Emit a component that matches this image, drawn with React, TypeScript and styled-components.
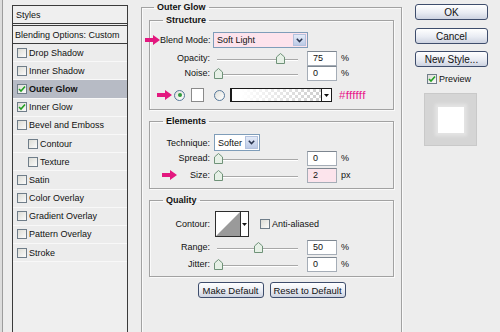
import styled, { createGlobalStyle } from "styled-components";

const GlobalStyle = createGlobalStyle`
  html, body {
    margin: 0;
    padding: 0;
    background: #ededed;
  }
`;

const Root = styled.div`
  box-sizing: border-box;
  color: #111;
  display: flex;
  align-items: flex-start;
  font-family: "Liberation Sans", Arial, sans-serif;
  font-size: 9px;
  height: 332px;
  overflow: hidden;
  padding-left: 12px;
  width: 500px;
  background: #ededed;
  box-shadow: inset 2px 0 0 #dcdcdc, inset 3px 0 0 #9c9c9c;
`;

/* ---------- left style list ---------- */

const StylePanel = styled.div`
  background: #efefef;
  border: 1px solid #3b3b3b;
  box-sizing: border-box;
  flex: none;
  height: 345px;
  margin-top: 5px;
  width: 116px;
`;

const PanelHeader = styled.div`
  align-items: center;
  border-bottom: 3px double #3b3b3b;
  display: flex;
  height: 17px;
  padding-left: 3px;
`;

const BlendingRow = styled.div`
  align-items: center;
  border-bottom: 1px solid #3b3b3b;
  display: flex;
  height: 17px;
  padding-left: 2px;
`;

const StyleRow = styled.div<{ $indent?: boolean; $active?: boolean }>`
  align-items: center;
  background: ${(p) => (p.$active ? "#b7bbc5" : "#ececec")};
  border-bottom: 1px solid #f8f8f8;
  box-sizing: border-box;
  display: flex;
  font-weight: ${(p) => (p.$active ? "bold" : "normal")};
  gap: 2px;
  height: 18.2px;
  padding-left: ${(p) => (p.$indent ? 15 : 4)}px;
`;

const Check = styled.span`
  align-items: center;
  background: linear-gradient(135deg, #dcdcd5, #fbfbfb);
  border: 1px solid #6f7d89;
  box-sizing: border-box;
  display: inline-flex;
  flex: none;
  height: 10px;
  justify-content: center;
  width: 10px;
`;

const CheckMark = () => (
  <svg width="8" height="8" viewBox="0 0 8 8">
    <path d="M1 4 L3 6 L7 1.5" fill="none" stroke="#22a022" strokeWidth="1.6" />
  </svg>
);

/* ---------- main area ---------- */

const MainColumn = styled.div`
  flex: none;
  margin-left: 13px;
  margin-top: 1px;
  width: 261px;
`;

const Group = styled.fieldset<{ $mt?: number; $pt?: number; $pb?: number; $px?: number }>`
  border: 1px solid #a2a2a2;
  box-shadow: inset 1px 1px 0 #fafafa, 1px 1px 0 #fafafa;
  margin: ${(p) => p.$mt ?? 0}px 0 0;
  min-inline-size: auto;
  padding: ${(p) => p.$pt ?? 0}px ${(p) => p.$px ?? 0}px ${(p) => p.$pb ?? 0}px;
`;

const OuterGroup = styled(Group)`
  height: 345px;
  box-sizing: border-box;
`;

const Legend = styled.legend<{ $ml: number }>`
  font-weight: bold;
  line-height: 12px;
  margin-left: ${(p) => p.$ml}px;
  padding: 0 3px;
`;

const Row = styled.div<{ $h: number; $mt?: number }>`
  align-items: center;
  display: flex;
  height: ${(p) => p.$h}px;
  margin-top: ${(p) => p.$mt ?? 0}px;
`;

const LabelCell = styled.div`
  align-items: center;
  display: flex;
  flex: none;
  width: 60px;
`;

const LabelText = styled.span`
  margin-left: auto;
  white-space: nowrap;
`;

const Pointer = ({ ml = 0 }: { ml?: number }) => (
  <svg width="15" height="10" viewBox="0 0 15 10" style={{ marginLeft: ml, flex: "none" }}>
    <path d="M0 3 H8 V0 L15 5 L8 10 V7 H0 Z" fill="#e3187f" />
  </svg>
);

const SelectBox = styled.div<{ $w: number; $ml: number; $h: number; $pink?: boolean }>`
  align-items: center;
  background: ${(p) => (p.$pink ? "#fde3ec" : "#fff")};
  border: 1px solid #7f9db9;
  box-sizing: border-box;
  display: flex;
  flex: none;
  height: ${(p) => p.$h}px;
  margin-left: ${(p) => p.$ml}px;
  width: ${(p) => p.$w}px;
`;

const SelectText = styled.span`
  flex: 1;
  padding-left: 3px;
`;

const DropButton = styled.span`
  align-items: center;
  align-self: stretch;
  background: linear-gradient(#e4ebf8, #bccae6);
  border: 1px solid #b3c2de;
  display: flex;
  justify-content: center;
  margin: 1px;
  width: 11px;
`;

const Chevron = () => (
  <svg width="7" height="5" viewBox="0 0 7 5">
    <path d="M0.8 0.8 L3.5 3.6 L6.2 0.8" fill="none" stroke="#2a3550" strokeWidth="1.5" />
  </svg>
);

const SliderWrap = styled.div`
  flex: none;
  height: 14px;
  margin-left: 5px;
  position: relative;
  width: 85px;
`;

const Track = styled.div`
  border-bottom: 1px solid #fff;
  border-top: 1px solid #a8a8a8;
  left: 2px;
  position: absolute;
  right: 2px;
  top: 8px;
`;

const Thumb = styled.svg`
  position: absolute;
  top: 2px;
`;

const Slider = ({ at }: { at: number }) => (
  <SliderWrap>
    <Track />
    <Thumb width="9" height="11" viewBox="0 0 9 11" style={{ left: at - 215 - 4 }}>
      <path d="M0.5 4 L4.5 0.5 L8.5 4 V10.5 H0.5 Z" fill="#e6f0e6" stroke="#6f9278" />
    </Thumb>
  </SliderWrap>
);

const NumberInput = styled.div<{ $pink?: boolean }>`
  align-items: center;
  background: ${(p) => (p.$pink ? "#fce4ec" : "#fff")};
  border: 1px solid #a5adb7;
  border-top-color: #7d8690;
  box-sizing: border-box;
  display: flex;
  flex: none;
  height: 15px;
  margin-left: 7px;
  padding-left: 5px;
  width: 30px;
`;

const Unit = styled.span`
  margin-left: 4px;
`;

const Radio = styled.span<{ $ml: number }>`
  align-items: center;
  background: linear-gradient(135deg, #e0e0da, #fff);
  border: 1px solid #56789a;
  border-radius: 50%;
  box-sizing: border-box;
  display: inline-flex;
  flex: none;
  height: 11px;
  justify-content: center;
  margin-left: ${(p) => p.$ml}px;
  width: 11px;
`;

const RadioDot = styled.span`
  background: #2f9a3b;
  border-radius: 50%;
  height: 4px;
  width: 4px;
`;

const Swatch = styled.span`
  background: #fff;
  border: 1px solid #8a8a8a;
  box-sizing: border-box;
  flex: none;
  height: 14px;
  margin-left: 6px;
  width: 13px;
`;

const GradientBox = styled.div`
  border: 1px solid #1a1a1a;
  border-left-width: 2px;
  box-sizing: border-box;
  display: flex;
  flex: none;
  height: 14px;
  margin-left: 5px;
  width: 102px;
`;

const GradientFill = styled.span`
  background:
    linear-gradient(to right, #fff 10%, rgba(255, 255, 255, 0) 95%),
    repeating-conic-gradient(#d0d0d0 0 25%, #fff 0 50%) 0 0 / 6px 6px;
  flex: 1;
`;

const SmallDrop = styled.span`
  align-items: center;
  background: #fff;
  border-left: 1px solid #1a1a1a;
  display: flex;
  justify-content: center;
  width: 9px;
`;

const DownTriangle = () => (
  <svg width="5" height="3" viewBox="0 0 5 3">
    <path d="M0 0 H5 L2.5 3 Z" fill="#111" />
  </svg>
);

const HexText = styled.span`
  color: #e8198b;
  font-size: 11.5px;
  letter-spacing: 0.3px;
  margin-left: 7px;
`;

const ContourBox = styled.div`
  background: #fff;
  border: 1px solid #2e2e2e;
  box-sizing: border-box;
  display: flex;
  flex: none;
  height: 26px;
  margin-left: 5px;
  width: 34px;
`;

const ContourCurve = styled.svg`
  flex: none;
`;

const ContourDrop = styled.span`
  align-items: center;
  border-left: 1px solid #2e2e2e;
  display: flex;
  flex: 1;
  justify-content: center;
`;

const CheckLabel = styled.label<{ $ml: number; $mt?: number }>`
  align-items: center;
  display: flex;
  gap: 2px;
  margin-left: ${(p) => p.$ml}px;
  margin-top: ${(p) => p.$mt ?? 0}px;
`;

const ButtonRow = styled.div`
  display: flex;
  gap: 6px;
  justify-content: center;
  margin-top: 5px;
`;

const DialogButton = styled.button<{ $w: number; $mt?: number }>`
  background: linear-gradient(#ffffff, #e9ecf3 55%, #cdd3e1);
  border: 1px solid #3e4d6c;
  border-radius: 3px;
  box-sizing: border-box;
  color: #111;
  font-family: inherit;
  font-size: 9.5px;
  height: 16px;
  line-height: 13px;
  margin-top: ${(p) => p.$mt ?? 0}px;
  padding: 0;
  width: ${(p) => p.$w}px;
`;

/* ---------- right column ---------- */

const SideColumn = styled.div`
  display: flex;
  flex: none;
  flex-direction: column;
  margin-left: 13px;
  margin-top: 4px;
  width: 73px;
`;

const SideButton = styled(DialogButton)`
  font-size: 10px;
`;

const PreviewBox = styled.div`
  align-items: center;
  background: #d5d5d5;
  border: 1px solid #c9c9c9;
  box-sizing: border-box;
  display: flex;
  height: 53px;
  justify-content: center;
  margin-left: 9px;
  margin-top: 9px;
  width: 53px;
`;

const PreviewSquare = styled.div`
  background: #fff;
  box-shadow: 0 0 3px 3px #e4e4e4;
  height: 26px;
  width: 26px;
`;

const styleItems = [
  { name: "Drop Shadow" },
  { name: "Inner Shadow" },
  { name: "Outer Glow", on: true, active: true },
  { name: "Inner Glow", on: true },
  { name: "Bevel and Emboss" },
  { name: "Contour", indent: true },
  { name: "Texture", indent: true },
  { name: "Satin" },
  { name: "Color Overlay" },
  { name: "Gradient Overlay" },
  { name: "Pattern Overlay" },
  { name: "Stroke" },
];

const SliderRow = ({
  label,
  at,
  value,
  unit,
  mt,
  pink,
  pointer,
}: {
  label: string;
  at: number;
  value: string;
  unit: string;
  mt?: number;
  pink?: boolean;
  pointer?: boolean;
}) => (
  <Row $h={14} $mt={mt}>
    <LabelCell>
      {pointer && <Pointer ml={12} />}
      <LabelText>{label}</LabelText>
    </LabelCell>
    <Slider at={at} />
    <NumberInput $pink={pink}>{value}</NumberInput>
    <Unit>{unit}</Unit>
  </Row>
);

const App = () => {
  return (
    <Root>
      <GlobalStyle />
      <StylePanel>
        <PanelHeader>Styles</PanelHeader>
        <BlendingRow>Blending Options: Custom</BlendingRow>
        {styleItems.map((item) => (
          <StyleRow key={item.name} $indent={item.indent} $active={item.active}>
            <Check>{item.on && <CheckMark />}</Check>
            {item.name}
          </StyleRow>
        ))}
      </StylePanel>

      <MainColumn>
        <OuterGroup $pt={1} $px={7}>
          <Legend $ml={5}>Outer Glow</Legend>

          <Group $pt={6} $pb={7}>
            <Legend $ml={13}>Structure</Legend>
            <Row $h={16}>
              <LabelCell>
                <Pointer ml={-5} />
                <LabelText>Blend Mode:</LabelText>
              </LabelCell>
              <SelectBox $w={95} $ml={3} $h={16} $pink>
                <SelectText>Soft Light</SelectText>
                <DropButton>
                  <Chevron />
                </DropButton>
              </SelectBox>
            </Row>
            <SliderRow label="Opacity:" at={280} value="75" unit="%" mt={3} />
            <SliderRow label="Noise:" at={218} value="0" unit="%" mt={1} />
            <Row $h={14} $mt={8}>
              <Pointer ml={7} />
              <Radio $ml={2}>
                <RadioDot />
              </Radio>
              <Swatch />
              <Radio $ml={10} />
              <GradientBox>
                <GradientFill />
                <SmallDrop>
                  <DownTriangle />
                </SmallDrop>
              </GradientBox>
              <HexText>#ffffff</HexText>
            </Row>
          </Group>

          <Group $mt={5} $pt={7} $pb={6}>
            <Legend $ml={13}>Elements</Legend>
            <Row $h={17}>
              <LabelCell>
                <LabelText>Technique:</LabelText>
              </LabelCell>
              <SelectBox $w={46} $ml={4} $h={17}>
                <SelectText>Softer</SelectText>
                <DropButton>
                  <Chevron />
                </DropButton>
              </SelectBox>
            </Row>
            <SliderRow label="Spread:" at={218} value="0" unit="%" />
            <SliderRow label="Size:" at={218} value="2" unit="px" mt={3} pink pointer />
          </Group>

          <Group $mt={5} $pt={5} $pb={5}>
            <Legend $ml={13}>Quality</Legend>
            <Row $h={26}>
              <LabelCell>
                <LabelText>Contour:</LabelText>
              </LabelCell>
              <ContourBox>
                <ContourCurve width="24" height="24" viewBox="0 0 24 24">
                  <path d="M0 24 L24 0 V24 Z" fill="#9a9a9a" />
                </ContourCurve>
                <ContourDrop>
                  <DownTriangle />
                </ContourDrop>
              </ContourBox>
              <CheckLabel $ml={11}>
                <Check />
                Anti-aliased
              </CheckLabel>
            </Row>
            <SliderRow label="Range:" at={258} value="50" unit="%" mt={3} />
            <SliderRow label="Jitter:" at={218} value="0" unit="%" mt={3} />
          </Group>

          <ButtonRow>
            <DialogButton $w={66}>Make Default</DialogButton>
            <DialogButton $w={76}>Reset to Default</DialogButton>
          </ButtonRow>
        </OuterGroup>
      </MainColumn>

      <SideColumn>
        <SideButton $w={73}>OK</SideButton>
        <SideButton $w={73} $mt={8}>
          Cancel
        </SideButton>
        <SideButton $w={73} $mt={7}>
          New Style...
        </SideButton>
        <CheckLabel $ml={12} $mt={7}>
          <Check>
            <CheckMark />
          </Check>
          Preview
        </CheckLabel>
        <PreviewBox>
          <PreviewSquare />
        </PreviewBox>
      </SideColumn>
    </Root>
  );
};

export default App;
